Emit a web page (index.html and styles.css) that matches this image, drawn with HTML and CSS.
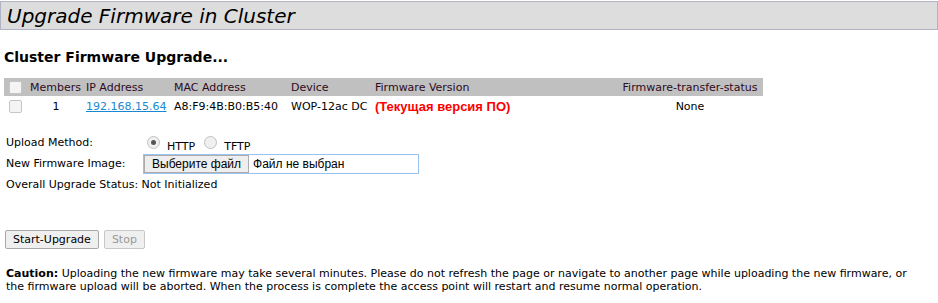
FILE: index.html
```html
<!DOCTYPE html>
<html lang="en">
<head>
  <meta charset="UTF-8">
  <title>Upgrade Firmware in Cluster</title>
  <link rel="stylesheet" href="styles.css">
</head>
<body>
  <div class="page-title">Upgrade Firmware in Cluster</div>

  <h2 class="section-title">Cluster Firmware Upgrade...</h2>

  <table class="cluster-table">
    <thead>
      <tr>
        <th class="col-cb"><span class="cbox"></span></th>
        <th class="col-members">Members</th>
        <th class="col-ip">IP Address</th>
        <th class="col-mac">MAC Address</th>
        <th class="col-device">Device</th>
        <th class="col-fw">Firmware Version</th>
        <th class="col-status">Firmware-transfer-status</th>
      </tr>
    </thead>
    <tbody>
      <tr>
        <td class="col-cb"><span class="cbox"></span></td>
        <td class="center">1</td>
        <td><a href="#">192.168.15.64</a></td>
        <td>A8:F9:4B:B0:B5:40</td>
        <td>WOP-12ac DC</td>
        <td class="fw-current">(Текущая версия ПО)</td>
        <td class="center">None</td>
      </tr>
    </tbody>
  </table>

  <div class="upgrade-form">
    <div class="form-row">
      <span class="label">Upload Method:</span>
      <span class="radios">
        <span class="radio checked"></span><span class="radio-label">HTTP</span>
        <span class="radio"></span><span class="radio-label">TFTP</span>
      </span>
    </div>
    <div class="form-row">
      <span class="label">New Firmware Image:</span>
      <span class="file-input">
        <span class="file-btn">Выберите файл</span>
        <span class="file-name">Файл не выбран</span>
      </span>
    </div>
    <div class="form-row status-row">
      Overall Upgrade Status: Not Initialized
    </div>
  </div>

  <div class="actions">
    <button class="btn">Start-Upgrade</button>
    <button class="btn" disabled>Stop</button>
  </div>

  <p class="caution"><b>Caution:</b> Uploading the new firmware may take several minutes. Please do not refresh the page or navigate to another page while uploading the new firmware, or the firmware upload will be aborted. When the process is complete the access point will restart and resume normal operation.</p>
</body>
</html>
```

FILE: styles.css
```css
body {
  margin: 0;
  padding: 0;
  font-family: 'DejaVu Sans', Verdana, sans-serif;
  font-size: 11px;
  color: #000;
  background-color: #fff;
}

.page-title {
  margin-top: 1px;
  height: 27px;
  line-height: 29px;
  padding-left: 6px;
  background-color: #dddddd;
  border: 1px solid #b0b3c3;
  font-size: 20px;
  font-style: italic;
  color: #000;
}

.section-title {
  margin: 17px 0 0 4px;
  font-size: 14px;
  font-weight: bold;
  height: 20px;
  line-height: 20px;
}

.cluster-table {
  margin: 11px 0 0 4px;
  width: 759px;
  border-collapse: collapse;
  table-layout: fixed;
}

.cluster-table th {
  background-color: #c0c0c0;
  color: #2e0a1e;
  font-weight: normal;
  text-align: left;
  height: 18px;
  padding: 0 2px;
  white-space: nowrap;
}

.cluster-table td {
  height: 20px;
  padding: 0 2px;
  white-space: nowrap;
  color: #000;
}

.cluster-table .col-cb { width: 17px; padding-left: 5px; }
.cluster-table .col-members { width: 52px; }
.cluster-table .col-ip { width: 84px; }
.cluster-table .col-mac { width: 113px; }
.cluster-table .col-device { width: 80px; }
.cluster-table .col-fw { width: 240px; }
.cluster-table .col-status { text-align: center; }

.cluster-table .center {
  text-align: center;
}

.cbox {
  display: inline-block;
  width: 11px;
  height: 11px;
  border: 1px solid #c6c6c6;
  border-radius: 2px;
  background-color: #f4f4f4;
  vertical-align: middle;
}

.cluster-table a {
  color: #1a88d0;
}

.cluster-table td.fw-current {
  color: #f00;
  font-family: 'Liberation Sans', Arial, sans-serif;
  font-weight: bold;
  font-size: 13px;
}

.upgrade-form {
  margin: 16px 0 0 6px;
}

.form-row {
  display: flex;
  align-items: center;
  min-height: 21px;
}

.label {
  width: 137px;
  flex-shrink: 0;
}

.radios {
  display: flex;
  align-items: center;
  padding-left: 4px;
}

.radio {
  width: 11px;
  height: 11px;
  border: 1px solid #c0c0c0;
  border-radius: 50%;
  background-color: #f0f0f0;
  position: relative;
  margin-right: 7px;
}

.radio.checked::after {
  content: "";
  position: absolute;
  left: 3px;
  top: 3px;
  width: 5px;
  height: 5px;
  border-radius: 50%;
  background-color: #555;
}

.radio-label {
  margin-top: 8px;
  margin-right: 9px;
}

.file-input {
  display: flex;
  align-items: center;
  width: 274px;
  height: 18px;
  border: 1px solid #99c2f0;
  font-family: 'Liberation Sans', Arial, sans-serif;
  font-size: 12px;
}

.file-btn {
  height: 16px;
  line-height: 16px;
  padding: 0 7px;
  background-color: #eeeeee;
  border: 1px solid #adadad;
}

.file-name {
  padding-left: 4px;
}

.status-row {
  min-height: 20px;
}

.actions {
  margin: 36px 0 0 5px;
  display: flex;
  gap: 5px;
}

.btn {
  font-family: 'DejaVu Sans', Verdana, sans-serif;
  font-size: 11px;
  height: 19px;
  padding: 0 7px;
  background-color: #efefef;
  border: 1px solid #a9a9a9;
  border-radius: 2px;
  color: #000;
}

.btn:disabled {
  color: #999;
  border-color: #c8c8c8;
}

.caution {
  margin: 18px 0 0 6px;
  max-width: 915px;
  line-height: 13px;
}
```
